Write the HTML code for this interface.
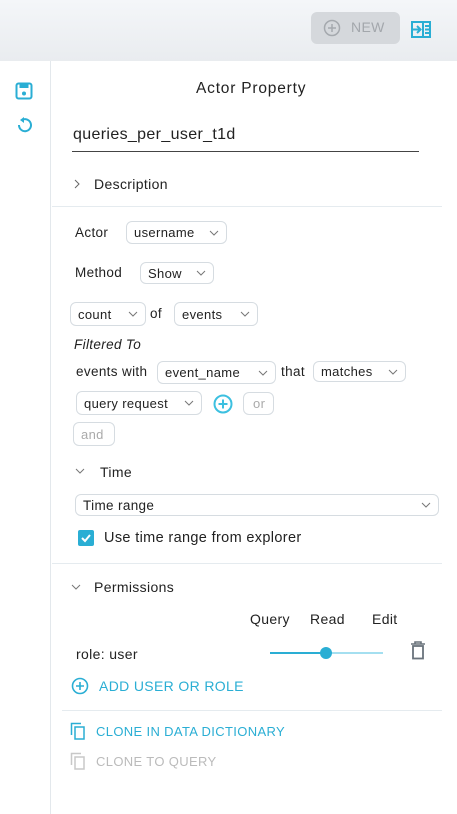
<!DOCTYPE html>
<html><head><style>
body{margin:0;width:457px;height:814px;background:#fff;font-family:"Liberation Sans",sans-serif;color:#222;position:relative;overflow:hidden;font-size:14px;letter-spacing:0.35px}
.a{position:absolute;white-space:nowrap}
.hdr{position:absolute;left:0;top:0;width:457px;height:61px;background:linear-gradient(#f4f6f9,#e9ecef)}
.sel{position:absolute;border:1px solid #d6dce1;border-radius:6px;box-sizing:border-box;font-size:13px;padding-left:7px;display:flex;align-items:center;color:#222}
.sel svg{position:absolute;right:7px;top:50%;margin-top:-3px}
.sep{position:absolute;height:1px;background:#e5ebef}
.blue{color:#2aaed4}
</style></head><body>
<div class="hdr"></div>
<div class="a" style="left:311px;top:12px;width:89px;height:32px;background:#d5d8dc;border-radius:6px"></div>
<svg class="a" style="left:323px;top:19px" width="18" height="18"><circle cx="9" cy="9" r="7.5" fill="none" stroke="#a5a9ae" stroke-width="1.5"/><path d="M9 5v8M5 9h8" stroke="#a5a9ae" stroke-width="1.5"/></svg>
<div class="a" style="left:351px;top:19px;color:#a3a7ac;font-size:14px">NEW</div>
<svg class="a" style="left:411px;top:21px" width="20" height="17"><rect x="1" y="1" width="18" height="15" fill="none" stroke="#2aaed4" stroke-width="2"/><path d="M1 8.5h8M6 5l3.5 3.5L6 12" stroke="#2aaed4" stroke-width="2" fill="none"/><path d="M12 1v15" stroke="#2aaed4" stroke-width="2"/><path d="M14 5h4M14 8.5h4M14 12h4" stroke="#2aaed4" stroke-width="2"/></svg>
<div class="a" style="left:50px;top:61px;width:1px;height:753px;background:#e3e8ec"></div>
<svg class="a" style="left:15px;top:82px" width="18" height="18"><rect x="1.5" y="1.5" width="15" height="15" rx="2" fill="none" stroke="#2aaed4" stroke-width="2"/><rect x="4.5" y="2" width="9" height="4" fill="#2aaed4"/><circle cx="9" cy="11.5" r="2" fill="#2aaed4"/></svg>
<svg class="a" style="left:15px;top:116px" width="18" height="20"><path d="M4 9a6 6 0 1 0 3-5" fill="none" stroke="#2aaed4" stroke-width="2"/><path d="M9 1L5 4l4 3z" fill="#2aaed4"/></svg>
<div class="a" style="left:196px;top:80px;font-size:15.5px;letter-spacing:0.8px">Actor Property</div>
<div class="a" style="left:73px;top:126px;font-size:16px">queries_per_user_t1d</div>
<div class="a" style="left:72px;top:151px;width:347px;height:1px;background:#444"></div>
<svg class="a" style="left:73px;top:179px" width="8" height="10"><path d="M2 1l4 4-4 4" fill="none" stroke="#666" stroke-width="1"/></svg>
<div class="a" style="left:94px;top:176px">Description</div>
<div class="sep" style="left:52px;top:206px;width:390px"></div>
<div class="a" style="left:75px;top:225px;font-size:13.5px">Actor</div>
<div class="sel" style="left:126px;top:221px;width:101px;height:23px">username<svg width="10" height="6"><path d="M1 1l4 4 4-4" fill="none" stroke="#777"/></svg></div>
<div class="a" style="left:75px;top:265px;font-size:13.5px">Method</div>
<div class="sel" style="left:140px;top:262px;width:74px;height:22px">Show<svg width="10" height="6"><path d="M1 1l4 4 4-4" fill="none" stroke="#777"/></svg></div>
<div class="sel" style="left:70px;top:302px;width:76px;height:24px">count<svg width="10" height="6"><path d="M1 1l4 4 4-4" fill="none" stroke="#777"/></svg></div>
<div class="a" style="left:150px;top:306px;font-size:13.5px">of</div>
<div class="sel" style="left:174px;top:302px;width:84px;height:24px">events<svg width="10" height="6"><path d="M1 1l4 4 4-4" fill="none" stroke="#777"/></svg></div>
<div class="a" style="left:74px;top:337px;font-size:13.5px;font-style:italic">Filtered To</div>
<div class="a" style="left:76px;top:364px;font-size:13.5px">events with</div>
<div class="sel" style="left:157px;top:361px;width:119px;height:23px">event_name<svg width="10" height="6"><path d="M1 1l4 4 4-4" fill="none" stroke="#777"/></svg></div>
<div class="a" style="left:281px;top:364px;font-size:13.5px">that</div>
<div class="sel" style="left:313px;top:361px;width:93px;height:21px">matches<svg width="10" height="6"><path d="M1 1l4 4 4-4" fill="none" stroke="#777"/></svg></div>
<div class="sel" style="left:76px;top:391px;width:126px;height:24px">query request<svg width="10" height="6"><path d="M1 1l4 4 4-4" fill="none" stroke="#777"/></svg></div>
<svg class="a" style="left:213px;top:394px" width="20" height="20"><circle cx="10" cy="10" r="8.5" fill="none" stroke="#3cc0e0" stroke-width="2"/><path d="M10 5.5v9M5.5 10h9" stroke="#3cc0e0" stroke-width="2"/></svg>
<div class="sel" style="left:243px;top:392px;width:31px;height:23px;color:#aaa;padding-left:9px">or</div>
<div class="sel" style="left:73px;top:422px;width:42px;height:24px;color:#aaa">and</div>
<svg class="a" style="left:75px;top:468px" width="10" height="7"><path d="M1 1l4 4 4-4" fill="none" stroke="#777"/></svg>
<div class="a" style="left:100px;top:464px">Time</div>
<div class="sel" style="left:75px;top:494px;width:364px;height:22px;font-size:13.5px">Time range<svg width="10" height="6"><path d="M1 1l4 4 4-4" fill="none" stroke="#777"/></svg></div>
<div class="a" style="left:78px;top:530px;width:16px;height:16px;background:#2aaed4;border-radius:2px"></div>
<svg class="a" style="left:78px;top:530px" width="16" height="16"><path d="M4 8l3 3 5-6" fill="none" stroke="#fff" stroke-width="2"/></svg>
<div class="a" style="left:104px;top:530px;font-size:14.5px">Use time range from explorer</div>
<div class="sep" style="left:52px;top:563px;width:390px"></div>
<svg class="a" style="left:71px;top:584px" width="10" height="7"><path d="M1 1l4 4 4-4" fill="none" stroke="#777"/></svg>
<div class="a" style="left:94px;top:579px">Permissions</div>
<div class="a" style="left:250px;top:611px">Query</div>
<div class="a" style="left:310px;top:611px">Read</div>
<div class="a" style="left:372px;top:611px">Edit</div>
<div class="a" style="left:76px;top:646px">role: user</div>
<div class="a" style="left:270px;top:652px;width:56px;height:2px;background:#2aaed4"></div>
<div class="a" style="left:326px;top:652px;width:57px;height:2px;background:#a4dff0"></div>
<div class="a" style="left:320px;top:647px;width:12px;height:12px;border-radius:50%;background:#2aaed4"></div>
<svg class="a" style="left:410px;top:641px" width="16" height="19"><path d="M1 3h14M5 3V1h6v2" fill="none" stroke="#6a737c" stroke-width="1.6"/><rect x="3" y="5" width="10" height="12.5" fill="none" stroke="#6a737c" stroke-width="1.8"/></svg>
<svg class="a" style="left:71px;top:677px" width="18" height="18"><circle cx="9" cy="9" r="7.5" fill="none" stroke="#2aaed4" stroke-width="1.6"/><path d="M9 5v8M5 9h8" stroke="#2aaed4" stroke-width="1.6"/></svg>
<div class="a blue" style="left:99px;top:678px;font-size:14px">ADD USER OR ROLE</div>
<div class="sep" style="left:62px;top:710px;width:380px"></div>
<svg class="a" style="left:70px;top:722px" width="16" height="18"><path d="M1.5 13V1.5H11" fill="none" stroke="#2aaed4" stroke-width="1.5"/><rect x="5" y="5" width="9" height="12" fill="none" stroke="#2aaed4" stroke-width="1.5"/></svg>
<div class="a blue" style="left:96px;top:724px;font-size:13px">CLONE IN DATA DICTIONARY</div>
<svg class="a" style="left:70px;top:752px" width="16" height="18"><path d="M1.5 13V1.5H11" fill="none" stroke="#c8c8c8" stroke-width="1.5"/><rect x="5" y="5" width="9" height="12" fill="none" stroke="#c8c8c8" stroke-width="1.5"/></svg>
<div class="a" style="left:96px;top:754px;font-size:13px;color:#bbb">CLONE TO QUERY</div>
</body></html>
